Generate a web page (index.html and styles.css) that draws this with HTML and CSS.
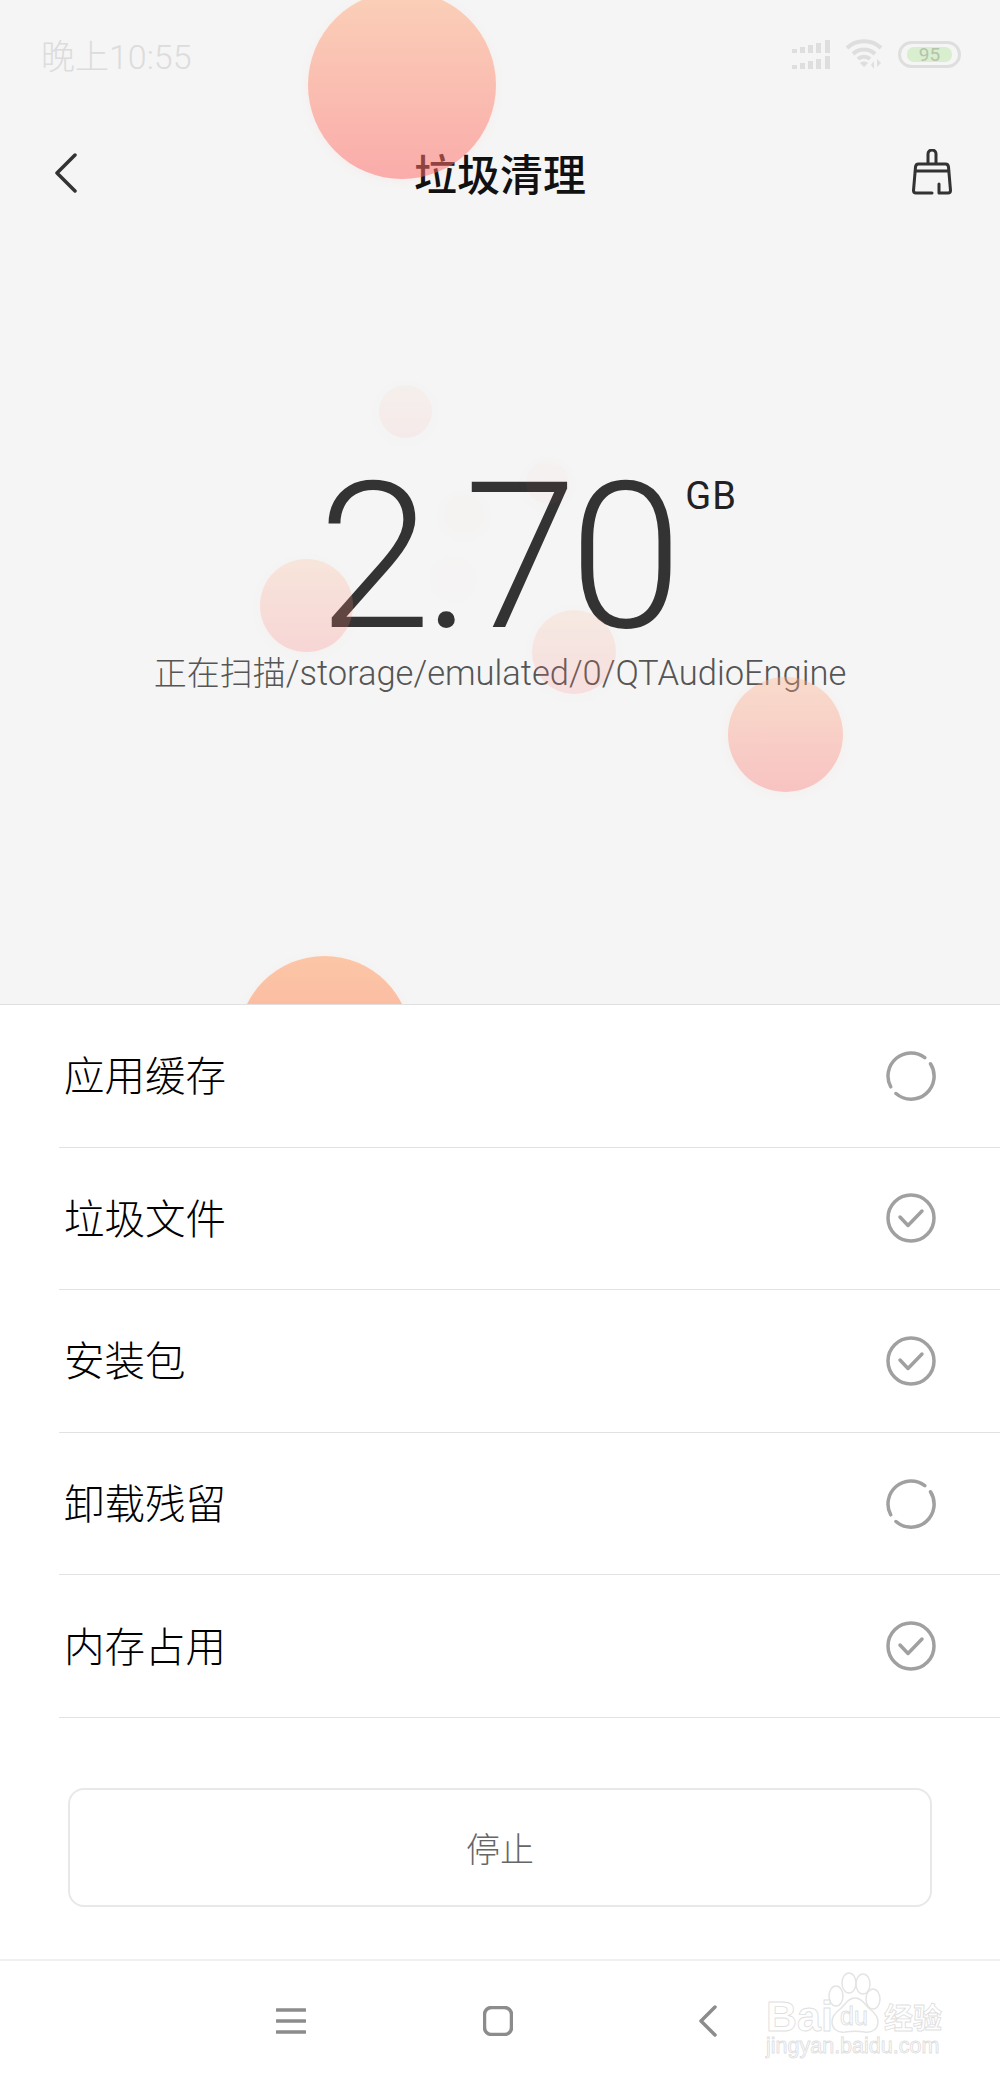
FILE: index.html
```html
<!DOCTYPE html>
<html lang="zh-CN">

<head>
    <meta charset="UTF-8">
    <meta name="viewport" content="width=device-width, initial-scale=1.0">
    <title>垃圾清理</title>
    <link rel="stylesheet" href="styles.css">
</head>

<body>
    <div class="screen">
        <div class="top">
            <div class="status-bar">
                <span class="time">晚上10:55</span>
                <div class="status-icons">
                    <svg class="signal" width="38" height="29" viewBox="0 0 38 29">
                        <path d="M0 9h5v4H0zM8 7h5v6H8zM16 5h5v8h-5zM24 3h5v10h-5zM33 0h5v13h-5zM0 25h5v4H0zM8 23h5v6H8zM16 21h5v8h-5zM24 19h5v10h-5zM33 16h5v13h-5z"/>
                    </svg>
                    <svg class="wifi" width="38" height="30" viewBox="0 0 38 30">
                        <path class="wifi-arc" d="M2 9C11 0 27 0 36 9M8 15c6-6 16-6 22 0M13 20c3-3 9-3 12 0"/>
                        <path class="wifi-dot" d="M19 28l-4-4c2-2 6-2 8 0zM29 30v-8l-3 4zM32 20v8l4-4z"/>
                    </svg>
                    <div class="battery"><span class="battery-fill">95</span></div>
                </div>
            </div>

            <div class="title-bar">
                <svg class="back" width="24" height="40" viewBox="0 0 24 40">
                    <path d="M21 2L3 20l18 18"/>
                </svg>
                <h1>垃圾清理</h1>
                <svg class="broom" width="40" height="46" viewBox="0 0 40 46">
                    <path d="M16 15V5a4 4 0 0 1 8 0v10M3 22h34M20 44H4q-2.500 0-2.500-2.500L3.500 18q.3-3 3-3h27q2.700 0 3 3l2 23.500q0 2.500-2.500 2.500h-9v-9"/>
                </svg>
            </div>

            <div class="hero">
                <div class="amount">
                    <span class="amount-value">2.70</span>
                    <span class="amount-unit">GB</span>
                </div>
                <p class="scan-path"><span class="scan-label">正在扫描</span>/storage/emulated/0/QTAudioEngine</p>
            </div>

            <div class="bubble bubble-top"></div>
            <div class="bubble bubble-a"></div>
            <div class="bubble bubble-b"></div>
            <div class="bubble bubble-c"></div>
            <div class="bubble bubble-d"></div>
            <div class="bubble bubble-e"></div>
            <div class="bubble bubble-f"></div>
            <div class="bubble bubble-g"></div>
            <div class="bubble bubble-h"></div>
        </div>

        <div class="sheet">
            <div class="scan-list">
                <div class="scan-row">
                    <span>应用缓存</span>
                    <svg class="state-icon" width="50" height="50" viewBox="0 0 50 50">
                        <path d="M38.800 6.600A23 23 0 0 0 4.700 35.800M10 42.500A23 23 0 0 0 44.500 12.800"/>
                    </svg>
                </div>
                <div class="scan-row">
                    <span>垃圾文件</span>
                    <svg class="state-icon" width="50" height="50" viewBox="0 0 50 50">
                        <circle cx="25" cy="25" r="23"/>
                        <path d="M14 24l8 8.500L36 18"/>
                    </svg>
                </div>
                <div class="scan-row">
                    <span>安装包</span>
                    <svg class="state-icon" width="50" height="50" viewBox="0 0 50 50">
                        <circle cx="25" cy="25" r="23"/>
                        <path d="M14 24l8 8.500L36 18"/>
                    </svg>
                </div>
                <div class="scan-row">
                    <span>卸载残留</span>
                    <svg class="state-icon" width="50" height="50" viewBox="0 0 50 50">
                        <path d="M38.800 6.600A23 23 0 0 0 4.700 35.800M10 42.500A23 23 0 0 0 44.500 12.800"/>
                    </svg>
                </div>
                <div class="scan-row">
                    <span>内存占用</span>
                    <svg class="state-icon" width="50" height="50" viewBox="0 0 50 50">
                        <circle cx="25" cy="25" r="23"/>
                        <path d="M14 24l8 8.500L36 18"/>
                    </svg>
                </div>
            </div>

            <div class="stop-wrap">
                <button class="stop-btn">停止</button>
            </div>

            <div class="nav-bar">
                <svg class="nav-icon" width="30" height="26" viewBox="0 0 30 26">
                    <path d="M1 2h28M1 13h28M1 24h28"/>
                </svg>
                <svg class="nav-icon" width="30" height="30" viewBox="0 0 30 30">
                    <rect x="1.500" y="1.500" width="27" height="27" rx="7"/>
                </svg>
                <svg class="nav-icon nav-back" width="18" height="32" viewBox="0 0 18 32">
                    <path d="M16 2L2 16l14 14"/>
                </svg>
            </div>

            <svg class="watermark" width="182" height="90" viewBox="0 0 182 90">
                <ellipse cx="84" cy="12" rx="7" ry="10"/>
                <ellipse cx="98" cy="13" rx="7" ry="10"/>
                <ellipse cx="71" cy="25" rx="7" ry="10"/>
                <ellipse cx="108" cy="28" rx="7" ry="10"/>
                <path d="M90 27c-8 0-10 8-16 12-5 4-7 8-7 12 0 7 6 11 13 10 6-1 14-1 20 0 7 1 13-3 13-10 0-4-2-8-7-12-6-4-8-12-16-12z"/>
                <text class="wm-bai" x="1" y="60">Bai</text>
                <text class="wm-du" x="75" y="54">du</text>
                <text class="wm-cn" x="119" y="58">经验</text>
                <text class="wm-url" x="1" y="82">jingyan.baidu.com</text>
            </svg>
        </div>
    </div>
</body>

</html>
```

FILE: styles.css
```css
* {
    margin: 0;
    padding: 0;
    box-sizing: border-box;
}

body {
    font-family: "Noto Sans CJK SC", "Noto Sans", sans-serif;
    background-color: #ffffff;
    color: #111;
}

.screen {
    width: 1000px;
    height: 2081px;
    display: flex;
    flex-direction: column;
    overflow: hidden;
}

.top {
    height: 1005px;
    background-color: #f5f5f5;
    position: relative;
    overflow: hidden;
    border-bottom: 1px solid #e0e0e0;
}

.status-bar {
    height: 68px;
    padding: 40px 39px 0 41px;
    display: flex;
    justify-content: space-between;
    align-items: center;
}

.time {
    font-family: Roboto, "Noto Sans CJK SC", sans-serif;
    font-size: 34px;
    font-weight: 300;
    color: #dcdcdc;
}

.status-icons {
    display: flex;
    align-items: center;
    gap: 15px;
}

.signal {
    fill: #dedede;
}

.wifi-arc {
    fill: none;
    stroke: #dedede;
    stroke-width: 4;
}

.wifi-dot {
    fill: #dedede;
}

.battery {
    width: 63px;
    height: 27px;
    border: 3px solid #dedede;
    border-radius: 14px;
    padding: 3px 6px;
}

.battery-fill {
    display: block;
    height: 100%;
    background-color: #d9edcf;
    border-radius: 7px;
    font-family: Roboto, sans-serif;
    font-size: 19px;
    line-height: 15px;
    text-align: center;
    color: #b3c4ab;
}

.title-bar {
    margin-top: 80px;
    height: 48px;
    padding: 0 48px 0 54px;
    display: flex;
    justify-content: space-between;
    align-items: center;
    position: relative;
}

h1 {
    font-size: 43px;
    font-weight: 500;
    line-height: 48px;
    color: #111;
    position: absolute;
    left: 0;
    right: 0;
    text-align: center;
}

.back {
    margin-top: 2px;
}

.back path {
    fill: none;
    stroke: #333;
    stroke-width: 3.500;
    stroke-linecap: round;
    stroke-linejoin: round;
}

.broom path {
    fill: none;
    stroke: #333;
    stroke-width: 3;
    stroke-linecap: round;
    stroke-linejoin: round;
}

.hero {
    margin-top: 262px;
    text-align: center;
}

.amount {
    display: flex;
    justify-content: center;
    align-items: flex-start;
    height: 193px;
    padding-left: 55px;
}

.amount-value {
    font-family: Roboto, sans-serif;
    font-size: 204px;
    font-weight: 300;
    line-height: 200px;
    letter-spacing: -8px;
    color: #333;
}

.amount-unit {
    font-family: Roboto, sans-serif;
    font-size: 38px;
    font-weight: 400;
    line-height: 40px;
    letter-spacing: 1px;
    color: #222;
    margin: 18px 0 0 11px;
}

.scan-path {
    font-family: Roboto, "Noto Sans CJK SC", sans-serif;
    font-size: 34.500px;
    font-weight: 300;
    line-height: 44px;
    color: #555;
}

.scan-label {
    font-size: 33px;
}

.bubble {
    position: absolute;
    border-radius: 50%;
    background: linear-gradient(rgba(255, 175, 130, 0.53), rgba(255, 107, 104, 0.53));
    box-shadow: 0 2px 10px rgba(255, 140, 120, 0.08);
}

.bubble-top {
    left: 308px;
    top: -9px;
    width: 188px;
    height: 188px;
}

.bubble-a {
    left: 379px;
    top: 385px;
    width: 53px;
    height: 53px;
    opacity: 0.14;
}

.bubble-b {
    left: 526px;
    top: 461px;
    width: 43px;
    height: 43px;
    opacity: 0.07;
}

.bubble-c {
    left: 444px;
    top: 494px;
    width: 40px;
    height: 40px;
    opacity: 0.03;
}

.bubble-d {
    left: 436px;
    top: 560px;
    width: 34px;
    height: 34px;
    opacity: 0.02;
}

.bubble-e {
    left: 260px;
    top: 559px;
    width: 93px;
    height: 93px;
    opacity: 0.42;
}

.bubble-f {
    left: 532px;
    top: 610px;
    width: 84px;
    height: 84px;
    opacity: 0.3;
}

.bubble-g {
    left: 728px;
    top: 677px;
    width: 115px;
    height: 115px;
    opacity: 0.68;
}

.bubble-h {
    left: 238px;
    top: 956px;
    width: 173px;
    height: 173px;
    background: linear-gradient(#fcc6a6, #f9a89a);
}

.sheet {
    flex: 1;
    background-color: #ffffff;
    display: flex;
    flex-direction: column;
    position: relative;
}

.scan-row {
    height: 142.600px;
    margin-left: 59px;
    padding: 0 64px 0 5px;
    display: flex;
    justify-content: space-between;
    align-items: center;
    border-bottom: 1px solid #e2e2e2;
    font-size: 40.500px;
    font-weight: 300;
    color: #000;
}

.scan-row span {
    margin-bottom: 4px;
}

.state-icon circle,
.state-icon path {
    fill: none;
    stroke: #a0a0a0;
    stroke-width: 3.500;
    stroke-linecap: round;
    stroke-linejoin: round;
}

.stop-wrap {
    height: 243px;
    padding: 70px 68px 0;
    border-bottom: 2px solid #f0f0f0;
}

.stop-btn {
    width: 100%;
    height: 119px;
    background-color: #ffffff;
    border: 2px solid #e8e8e8;
    border-radius: 16px;
    font-family: inherit;
    font-size: 34px;
    font-weight: 300;
    color: #666;
}

.nav-bar {
    flex: 1;
    padding-left: 276px;
    display: flex;
    align-items: center;
    gap: 177px;
}

.nav-back {
    margin-left: 9px;
}

.nav-icon path,
.nav-icon rect {
    fill: none;
    stroke: #8c8c8c;
    stroke-width: 3.500;
    stroke-linecap: round;
    stroke-linejoin: round;
}

.watermark {
    position: absolute;
    left: 765px;
    bottom: 20px;
}

.watermark ellipse,
.watermark path {
    fill: #ffffff;
    stroke: #e4e4e4;
    stroke-width: 1.500;
}

.watermark text {
    fill: #ffffff;
    stroke: #dfdfdf;
    stroke-width: 0.900;
}

.wm-bai {
    font-family: "Liberation Sans", sans-serif;
    font-size: 43px;
    font-weight: 700;
}

.wm-du {
    font-family: "Liberation Sans", sans-serif;
    font-size: 25px;
}

.wm-cn {
    font-size: 29px;
    font-weight: 700;
}

.wm-url {
    font-family: "Liberation Sans", sans-serif;
    font-size: 21.500px;
}
```
